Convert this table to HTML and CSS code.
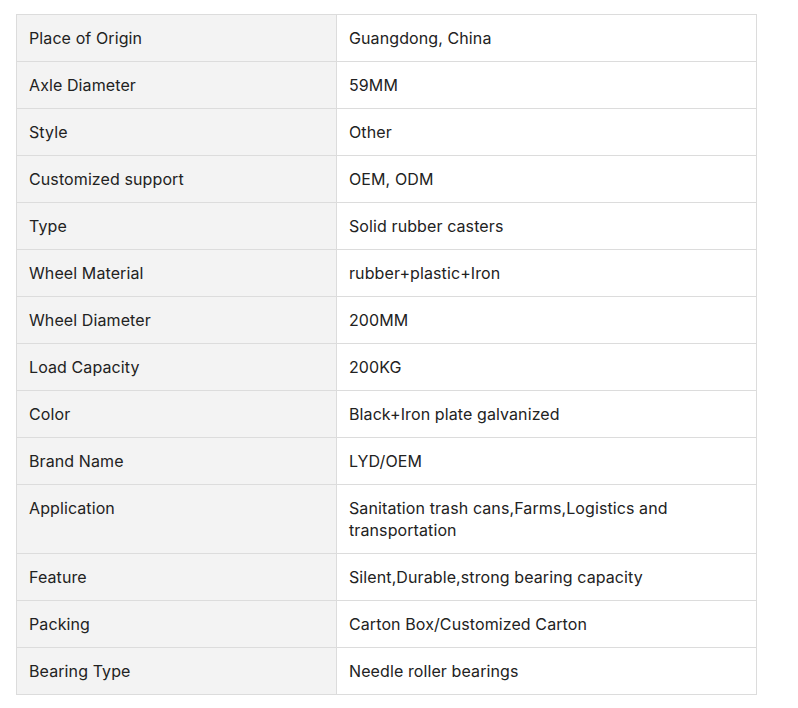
FILE: index.html
```html
<!DOCTYPE html>
<html>
<head>
<meta charset="utf-8">
<link rel="stylesheet" href="styles.css">
</head>
<body>
<div class="wrap">
<table class="spec">
<colgroup><col class="c1"><col class="c2"></colgroup>
<tbody>
<tr><td class="k">Place of Origin</td><td class="v">Guangdong, China</td></tr>
<tr><td class="k">Axle Diameter</td><td class="v">59MM</td></tr>
<tr><td class="k">Style</td><td class="v">Other</td></tr>
<tr><td class="k">Customized support</td><td class="v">OEM, ODM</td></tr>
<tr><td class="k">Type</td><td class="v">Solid rubber casters</td></tr>
<tr><td class="k">Wheel Material</td><td class="v">rubber+plastic+Iron</td></tr>
<tr><td class="k">Wheel Diameter</td><td class="v">200MM</td></tr>
<tr><td class="k">Load Capacity</td><td class="v">200KG</td></tr>
<tr><td class="k">Color</td><td class="v">Black+Iron plate galvanized</td></tr>
<tr><td class="k">Brand Name</td><td class="v">LYD/OEM</td></tr>
<tr><td class="k">Application</td><td class="v">Sanitation trash cans,Farms,Logistics and<br>transportation</td></tr>
<tr><td class="k">Feature</td><td class="v">Silent,Durable,strong bearing capacity</td></tr>
<tr><td class="k">Packing</td><td class="v">Carton Box/Customized Carton</td></tr>
<tr><td class="k">Bearing Type</td><td class="v">Needle roller bearings</td></tr>
</tbody>
</table>
</div>
</body>
</html>
```
FILE: styles.css
```css
html, body {
  margin: 0;
  padding: 0;
  background: #fff;
}
.wrap {
  padding: 14px 0 0 16px;
}
.spec {
  border-collapse: collapse;
  table-layout: fixed;
  width: 740px;
  font-family: Inter, "Noto Sans", sans-serif;
  font-size: 16px;
  line-height: 22px;
  letter-spacing: 0.1px;
  color: #222;
}
.c1 { width: 320px; }
.c2 { width: 420px; }
.spec td {
  border: 1px solid #dcdcdc;
  padding: 12px 12px;
  vertical-align: top;
}
.spec td.k {
  background: #f3f3f3;
}
.spec td.v {
  background: #fff;
}
```
